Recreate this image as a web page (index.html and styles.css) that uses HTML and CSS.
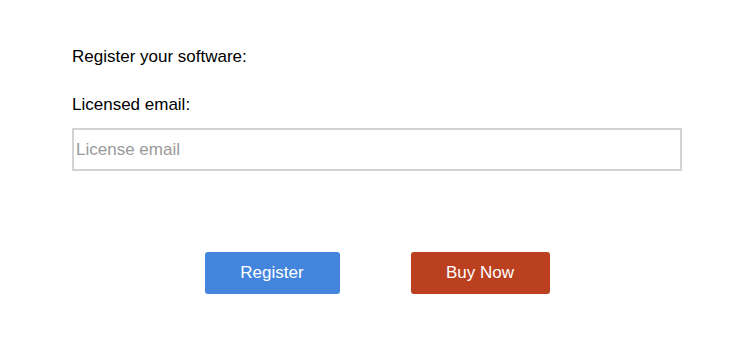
FILE: index.html
```html
<!DOCTYPE html>
<html>
<head>
<meta charset="utf-8">
<link rel="stylesheet" href="styles.css">
</head>
<body>
<div class="panel">
  <p class="label first">Register your software:</p>
  <p class="label second">Licensed email:</p>
  <input class="email" type="text" placeholder="License email">
  <div class="actions">
    <button class="btn btn-register">Register</button>
    <button class="btn btn-buy">Buy Now</button>
  </div>
</div>
</body>
</html>
```
FILE: styles.css
```css
html, body {
  margin: 0;
  padding: 0;
  background: #ffffff;
}
body {
  font-family: "Liberation Sans", Arial, sans-serif;
  color: #000;
}
.panel {
  width: 610px;
  margin-left: 72px;
  padding-top: 47px;
}
.label {
  margin: 0;
  font-size: 17px;
  line-height: 19px;
}
.second {
  margin-top: 29px;
}
.email {
  display: block;
  box-sizing: border-box;
  width: 610px;
  height: 43px;
  margin-top: 14px;
  border: 2px solid #d3d3d3;
  padding: 0 2px;
  font-family: "Liberation Sans", Arial, sans-serif;
  font-size: 17px;
  outline: none;
}
.email::placeholder {
  color: #9a9a9a;
}
.actions {
  display: flex;
  justify-content: center;
  gap: 71px;
  margin-top: 81px;
}
.btn {
  height: 42px;
  border: none;
  border-radius: 3px;
  color: #fff;
  font-family: "Liberation Sans", Arial, sans-serif;
  font-size: 17px;
  padding: 0;
}
.btn-register {
  width: 135px;
  background: #4385dc;
}
.btn-buy {
  width: 139px;
  background: #bb401f;
}
```
